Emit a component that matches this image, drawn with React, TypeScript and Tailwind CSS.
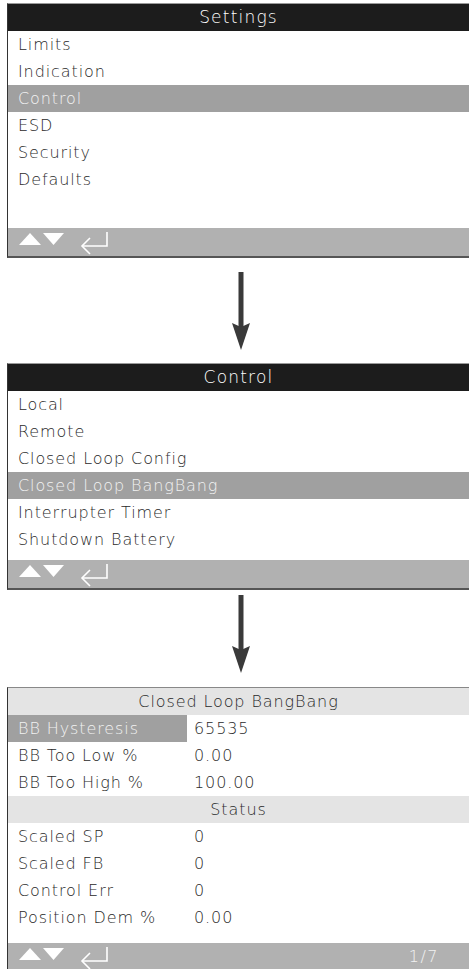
import React from "react";

const font = { fontFamily: '"DejaVu Sans", "Liberation Sans", sans-serif' };

function FooterIcons() {
  return (
    <svg width="110" height="28" viewBox="0 0 110 28" className="block">
      <polygon points="11,17 22,5 33,17" fill="#ffffff" />
      <polygon points="35,5 56,5 45.5,17" fill="#ffffff" />
      <polyline points="99,4 99,18 74,18" fill="none" stroke="#ffffff" strokeWidth="1.6" />
      <polyline points="82,10 74,18 82,26" fill="none" stroke="#ffffff" strokeWidth="1.6" />
    </svg>
  );
}

function Arrow() {
  return (
    <div className="flex justify-center pl-[12px]">
      <svg width="18" height="78" viewBox="0 0 18 78" className="block">
        <rect x="6.5" y="0" width="5" height="55" fill="#3a3a3a" />
        <polygon points="0,51 9,55 18,51 9,78" fill="#3a3a3a" />
      </svg>
    </div>
  );
}

function Row({ label, active }: { label: string; active?: boolean }) {
  return (
    <div
      className={
        "h-[27px] flex items-center pl-[10px] text-[16px] tracking-[0.9px] " +
        (active ? "bg-[#a0a0a0] text-[#f2f2f2]" : "text-[#2a2a2a]")
      }
    >
      {label}
    </div>
  );
}

function MenuScreen({
  title,
  items,
  active,
  gap,
}: {
  title: string;
  items: string[];
  active: number;
  gap: string;
}) {
  return (
    <div className="ml-[7px] w-[462px] border-t border-t-[#9a9a9a] border-l-[1.5px] border-l-[#333] border-b-2 border-b-[#555] bg-white">
      <div className="h-[27px] bg-[#1c1c1c] text-white text-[17px] tracking-[1.2px] flex items-center justify-center">
        {title}
      </div>
      {items.map((it, i) => (
        <Row key={it} label={it} active={i === active} />
      ))}
      <div className={gap} />
      <div className="h-[28px] bg-[#b1b1b1] flex items-center">
        <FooterIcons />
      </div>
    </div>
  );
}

function KV({ k, v, active }: { k: string; v: string; active?: boolean }) {
  return (
    <div className="h-[27px] flex items-center text-[16px] tracking-[0.9px] text-[#2a2a2a]">
      <div
        className={
          "w-[179px] h-full flex items-center pl-[10px] " +
          (active ? "bg-[#a0a0a0] text-[#f2f2f2]" : "")
        }
      >
        {k}
      </div>
      <div className="pl-[7px]">{v}</div>
    </div>
  );
}

export default function App() {
  return (
    <div className="w-[469px] h-[969px] overflow-hidden bg-white font-extralight" style={font}>
      <div className="h-[3px]" />
      <MenuScreen
        title="Settings"
        items={["Limits", "Indication", "Control", "ESD", "Security", "Defaults"]}
        active={2}
        gap="h-[35px]"
      />
      <div className="h-[14px]" />
      <Arrow />
      <div className="h-[13px]" />
      <MenuScreen
        title="Control"
        items={[
          "Local",
          "Remote",
          "Closed Loop Config",
          "Closed Loop BangBang",
          "Interrupter Timer",
          "Shutdown Battery",
        ]}
        active={3}
        gap="h-[7px]"
      />
      <div className="h-[5px]" />
      <Arrow />
      <div className="h-[14px]" />
      <div className="ml-[7px] w-[462px] border-t border-t-[#888] border-l-[1.5px] border-l-[#333] bg-white">
        <div className="h-[27px] bg-[#e4e4e4] text-[#2a2a2a] text-[16px] tracking-[0.9px] flex items-center justify-center">
          Closed Loop BangBang
        </div>
        <KV k="BB Hysteresis" v="65535" active />
        <KV k="BB Too Low %" v="0.00" />
        <KV k="BB Too High %" v="100.00" />
        <div className="h-[27px] bg-[#e4e4e4] text-[#2a2a2a] text-[16px] tracking-[0.9px] flex items-center justify-center">
          Status
        </div>
        <KV k="Scaled SP" v="0" />
        <KV k="Scaled FB" v="0" />
        <KV k="Control Err" v="0" />
        <KV k="Position Dem %" v="0.00" />
        <div className="h-[12px]" />
        <div className="h-[28px] bg-[#b1b1b1] flex items-center justify-between">
          <FooterIcons />
          <div className="pr-[30px] text-[16px] tracking-[1.5px] text-[#f2f2f2]">1/7</div>
        </div>
      </div>
    </div>
  );
}
